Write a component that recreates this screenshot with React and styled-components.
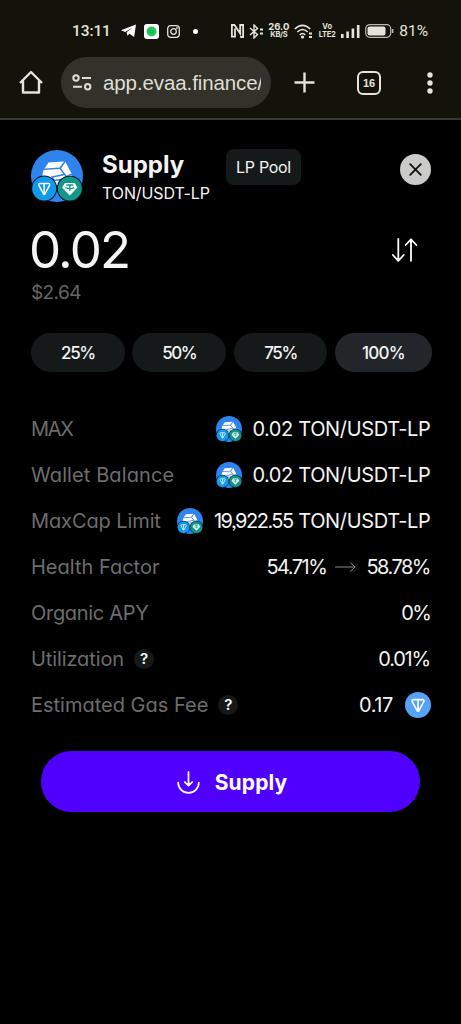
import React, { useState } from 'react';
import styled, { createGlobalStyle } from 'styled-components';

const GlobalStyle = createGlobalStyle`
  * {
    box-sizing: border-box;
  }

  body {
    margin: 0;
    background: #000;
    color: #f4f4f4;
    font-family: Inter, "Liberation Sans", sans-serif;
    font-feature-settings: "cv11", "ss03";
  }

  svg {
    display: block;
    flex-shrink: 0;
  }

  button {
    border: 0;
    padding: 0;
    background: none;
    color: inherit;
    font: inherit;
    font-feature-settings: inherit;
    cursor: pointer;
  }
`;

const Screen = styled.div`
  display: flex;
  flex-direction: column;
  width: 461px;
  height: 1024px;
  overflow: hidden;
`;

const Chrome = styled.header`
  height: 120px;
  background: #13130b;
  border-bottom: 2px solid #393734;
  color: #e4e4da;
`;

const StatusBar = styled.div`
  display: flex;
  align-items: center;
  justify-content: space-between;
  height: 57px;
  padding: 5px 33px 0 72px;
`;

const StatusGroup = styled.div`
  display: flex;
  align-items: center;
  gap: ${({ $gap }) => $gap}px;
`;

const Clock = styled.span`
  font: 500 15.5px Roboto, sans-serif;
  letter-spacing: -0.1px;
  width: 41px;
`;

const Dot = styled.span`
  width: 5px;
  height: 5px;
  border-radius: 50%;
  background: #fff;
  margin-left: 5px;
`;

const Stacked = styled.span`
  display: flex;
  flex-direction: column;
  align-items: center;
  width: ${({ $width }) => $width}px;
  font-size: ${({ $size }) => $size}px;
  font-weight: 700;
  line-height: 8px;
  white-space: nowrap;

  small {
    font-size: 7.5px;
    letter-spacing: -0.3px;
  }
`;

const Battery = styled.span`
  font: 400 15.5px Roboto, sans-serif;
`;

const Toolbar = styled.div`
  display: flex;
  align-items: center;
  height: 51px;
  padding-left: 19px;
`;

const AddressBar = styled.div`
  display: flex;
  align-items: center;
  width: 210px;
  height: 51px;
  margin: 0 23px 0 18px;
  padding: 0 10px 0 11px;
  border-radius: 26px;
  background: #32322a;
`;

const Url = styled.span`
  width: 158px;
  margin-left: 11px;
  overflow: hidden;
  white-space: nowrap;
  font: 400 20.5px "Liberation Sans", sans-serif;
  letter-spacing: -0.1px;
  color: #deded4;
`;

const TabCount = styled.button`
  display: grid;
  place-items: center;
  width: 24px;
  height: 24px;
  margin: 0 46px 0 42px;
  border: 2px solid #e4e4da;
  border-radius: 6px;
  font: 700 11px "Liberation Sans", sans-serif;
`;

const Sheet = styled.main`
  padding: 29px 30px 0 31px;
`;

const TopRow = styled.div`
  display: flex;
  align-items: flex-start;
  height: 76px;

  > svg {
    margin-top: 1px;
  }
`;

const Titles = styled.div`
  margin-left: 19px;
  width: 124px;
`;

const Title = styled.h1`
  margin: 1px 0 0;
  font-size: 24px;
  font-weight: 700;
  line-height: 30px;
  letter-spacing: 0;
`;

const Subtitle = styled.div`
  font-size: 16px;
  line-height: 26px;
  letter-spacing: -0.1px;
  white-space: nowrap;
`;

const Badge = styled.div`
  display: grid;
  place-items: center;
  width: 75px;
  height: 36px;
  border-radius: 8px;
  background: #15191a;
  font-size: 16px;
  letter-spacing: -0.3px;
`;

const CloseButton = styled.button`
  display: grid;
  place-items: center;
  width: 31px;
  height: 31px;
  margin: 5px 0 0 auto;
  border-radius: 50%;
  background: #cbcbca;
  color: #111;
`;

const AmountRow = styled.div`
  display: flex;
  align-items: center;
  justify-content: space-between;
  height: 50px;
  padding-right: 13px;
`;

const Amount = styled.div`
  font-size: 51px;
  line-height: 50px;
  letter-spacing: -1.8px;
  margin-left: -2px;
`;

const Fiat = styled.div`
  height: 58px;
  padding-top: 6px;
  font-size: 19px;
  line-height: 24px;
  letter-spacing: -0.6px;
  color: #666;
`;

const Shares = styled.div`
  display: flex;
  gap: 7.5px;
  margin-right: -1px;
`;

const Share = styled.button`
  flex: ${({ $active }) => ($active ? '0 0 97px' : '1')};
  height: 39px;
  border-radius: 20px;
  background: ${({ $active }) => ($active ? '#22262a' : '#15191a')};
  font-size: 17px;
  font-weight: 550;
  letter-spacing: ${({ $active }) => ($active ? -0.7 : -1.4)}px;
`;

const Details = styled.div`
  margin-top: 34px;
`;

const Row = styled.div`
  display: flex;
  align-items: center;
  justify-content: space-between;
  height: 46px;
  font-size: 20px;
  line-height: 26px;
`;

const Label = styled.span`
  display: flex;
  align-items: center;
  gap: 10px;
  color: #6d6d6d;
  letter-spacing: ${({ $track = 0 }) => $track}px;
  white-space: nowrap;
`;

const Value = styled.span`
  display: flex;
  align-items: center;
  gap: ${({ $gap = 11 }) => $gap}px;
  white-space: nowrap;
`;

const Num = styled.span`
  letter-spacing: ${({ $track = -1.2 }) => $track}px;
  padding-right: 1px;
`;

const Unit = styled.span`
  margin-left: -6px;
  padding-right: 0.5px;
  letter-spacing: -0.35px;
`;

const Help = styled.span`
  display: grid;
  place-items: center;
  width: 20px;
  height: 20px;
  border-radius: 50%;
  background: #15191a;
  color: #fff;
  font-size: 15px;
  font-weight: 600;
  line-height: 20px;
  letter-spacing: 0;
`;

const SupplyButton = styled.button`
  display: flex;
  align-items: center;
  justify-content: center;
  gap: 15px;
  width: 379px;
  height: 61px;
  margin: 23px 0 0 10px;
  padding: 1px 0 0 3px;
  border-radius: 31px;
  background: #5000ff;
  color: #fff;
  font-size: 21px;
  font-weight: 700;
  letter-spacing: 0.1px;
`;

const TonMark = ({ x, y, scale = 1, fill }) => (
  <g transform={`translate(${x} ${y}) scale(${scale})`} fill="none" stroke="#fff" strokeWidth="1.5" strokeLinejoin="round">
    <circle r="12" fill={fill} stroke="none" />
    <path d="M-4.4-5H4.4Q6-4.6 5.2-2.8L.7 5.4Q0 6.2-.7 5.4L-5.2-2.8Q-6-4.6-4.4-5ZM0-5V5.4" />
  </g>
);

const PoolIcon = ({ size }) => (
  <svg width={size} height={size} viewBox="0 0 52 52">
    <circle cx="26" cy="26" r="26" fill="#2e83ec" />
    <path d="M17.5 12.5 33 11.5 28.5 17.5 13.5 18.5ZM34.5 12 40.5 23.5 35.5 25.5 30 18.5ZM12.5 20 28.5 19 34 26 41 25 42.5 36H9Z" fill="#fff" />
    <path d="M33.5 24.5 21 27 23 30.5 30 29.5 27 34" fill="none" stroke="#2e83ec" strokeWidth="1.6" />
    <circle cx="13.2" cy="38.5" r="13" fill="#07131d" />
    <TonMark x="13.2" y="38.5" fill="#1099ed" />
    <circle cx="38.8" cy="38.5" r="13" fill="#07131d" />
    <circle cx="38.8" cy="38.5" r="12" fill="#10978b" />
    <path d="M34 33H43.6L46.5 37.5 38.8 45.5 31.1 37.5Z" fill="#fff" />
    <path d="M35.3 35h7M38.8 35v6M34.5 37.7q4.3 1.8 8.6 0" fill="none" stroke="#10978b" strokeWidth="1.3" />
  </svg>
);

const shares = [25, 50, 75, 100];

const App = () => {
  const [share, setShare] = useState(100);

  return (
    <Screen>
      <GlobalStyle />
      <Chrome>
        <StatusBar>
          <StatusGroup $gap={8}>
            <Clock>13:11</Clock>
            <svg width="15" height="14" viewBox="0 0 16 14">
              <path d="M16 0 14 13.5 9 10 6.8 12 6 8.2 12 3.5 4.5 8 0 6.3Z" fill="#fff" />
            </svg>
            <svg width="15" height="15" viewBox="0 0 15 15">
              <rect width="15" height="15" rx="3" fill="#fff" />
              <circle cx="7.5" cy="7.5" r="5" fill="#1fca63" />
              <path d="M5 6.7q2.5-.7 5 .3M5.3 8.7q2-.5 4 .3" fill="none" stroke="#139b49" strokeWidth=".8" />
            </svg>
            <svg width="13" height="13" viewBox="0 0 13 13" fill="none" stroke="#e4e4da" strokeWidth="1.3">
              <rect x=".7" y=".7" width="11.6" height="11.6" rx="3" />
              <circle cx="6.5" cy="6.5" r="2.8" />
              <circle cx="10" cy="3" r=".3" />
            </svg>
            <Dot />
          </StatusGroup>
          <StatusGroup $gap={5.2}>
            <svg width="13" height="14" viewBox="0 0 13 14" fill="none" stroke="#e4e4da" strokeWidth="1.8">
              <path d="M.9 0V12.6H4V4.5M4 1H1M3.5 1 9.2 9.5V1H12.1V13H9.2" />
            </svg>
            <svg width="14" height="15" viewBox="0 0 14 15" fill="none" stroke="#e4e4da" strokeWidth="1.4">
              <path d="M1 4 8.5 10.5 5 14V1L8.5 4.5 1 11" />
              <path d="M11 5.5h3M11 9.5h3" strokeWidth="2" />
            </svg>
            <Stacked $width={21} $size={9.5}>
              26.0<small>KB/S</small>
            </Stacked>
            <svg width="19" height="15" viewBox="0 0 19 15" fill="none" stroke="#e4e4da" strokeWidth="1.6">
              <path d="M.8 5Q8.5-2.4 16.2 5M3.3 8Q8.5 3 13.7 8M5.8 10.8Q8.5 8.2 11.2 10.8" />
              <circle cx="8.5" cy="13" r=".8" fill="#e4e4da" />
              <path d="M15 9.6h3M15 13h3" strokeWidth="2" />
            </svg>
            <Stacked $width={17} $size={7.5}>
              <span>Vo</span>
              <small>LTE2</small>
            </Stacked>
            <svg width="19" height="14" viewBox="0 0 19 14" fill="#e4e4da">
              <path d="M0 10h2.6v4H0zM5.3 7.5h2.6V14H5.3zM10.6 4.5h2.6V14h-2.6zM15.9 1h2.6v13h-2.6z" />
            </svg>
            <svg width="29" height="14" viewBox="0 0 29 14">
              <rect x=".7" y=".7" width="25" height="12.6" rx="4" fill="none" stroke="#b8b8ae" strokeWidth="1.2" />
              <rect x="2.5" y="2.5" width="18" height="9" rx="2" fill="#e4e4da" />
              <path d="M27.6 5v4" stroke="#b8b8ae" strokeWidth="1.6" />
            </svg>
            <Battery>81%</Battery>
          </StatusGroup>
        </StatusBar>
        <Toolbar>
          <svg width="24" height="25" viewBox="0 0 24 25" fill="none" stroke="#e4e4da" strokeWidth="2.4" strokeLinejoin="round">
            <path d="M1 13 12 2 23 13M4 10.5V22.5H20V10.5" />
          </svg>
          <AddressBar>
            <svg width="20" height="17" viewBox="0 0 20 17" fill="none" stroke="#deded4" strokeWidth="2">
              <circle cx="4" cy="4" r="2.7" />
              <circle cx="15.7" cy="12.8" r="2.7" />
              <path d="M10 4h9M1 12.8h9" />
            </svg>
            <Url>app.evaa.finance/</Url>
          </AddressBar>
          <svg width="21" height="21" viewBox="0 0 21 21" stroke="#e4e4da" strokeWidth="2.4">
            <path d="M10.5.5v20M.5 10.5h20" />
          </svg>
          <TabCount>16</TabCount>
          <svg width="6" height="22" viewBox="0 0 6 22" fill="#e4e4da">
            <circle cx="3" cy="3" r="2.7" />
            <circle cx="3" cy="11" r="2.7" />
            <circle cx="3" cy="19" r="2.7" />
          </svg>
        </Toolbar>
      </Chrome>

      <Sheet>
        <TopRow>
          <PoolIcon size={52} />
          <Titles>
            <Title>Supply</Title>
            <Subtitle>TON/USDT-LP</Subtitle>
          </Titles>
          <Badge>LP Pool</Badge>
          <CloseButton aria-label="Close">
            <svg width="13" height="13" viewBox="0 0 13 13" stroke="currentColor" strokeWidth="1.8" strokeLinecap="round">
              <path d="M1.2 1.2 11.8 11.8M11.8 1.2 1.2 11.8" />
            </svg>
          </CloseButton>
        </TopRow>

        <AmountRow>
          <Amount>0.02</Amount>
          <svg width="26" height="24" viewBox="0 0 26 24" fill="none" stroke="#fff" strokeWidth="1.8" strokeLinecap="round" strokeLinejoin="round">
            <path d="M6.3 1V22.5M.9 17 6.3 22.8 11.7 17M19 22.8V1.5M13.6 7 19 1.3 24.4 7" />
          </svg>
        </AmountRow>
        <Fiat>$2.64</Fiat>

        <Shares>
          {shares.map((value) => (
            <Share key={value} $active={value === share} onClick={() => setShare(value)}>
              {value}%
            </Share>
          ))}
        </Shares>

        <Details>
          <Row>
            <Label $track={-1.3}>MAX</Label>
            <Value $gap={10.5}>
              <PoolIcon size={26} />
              <Num $track={-0.5}>0.02</Num>
              <Unit>TON/USDT-LP</Unit>
            </Value>
          </Row>
          <Row>
            <Label $track={0.1}>Wallet Balance</Label>
            <Value $gap={10.5}>
              <PoolIcon size={26} />
              <Num $track={-0.5}>0.02</Num>
              <Unit>TON/USDT-LP</Unit>
            </Value>
          </Row>
          <Row>
            <Label $track={-0.1}>MaxCap Limit</Label>
            <Value $gap={10.5}>
              <PoolIcon size={26} />
              <Num $track={-1.5}>19,922.55</Num>
              <Unit>TON/USDT-LP</Unit>
            </Value>
          </Row>
          <Row>
            <Label>Health Factor</Label>
            <Value $gap={8}>
              <Num $track={-1.5}>54.71%</Num>
              <svg width="23" height="10" viewBox="0 0 23 10" fill="none" stroke="#8a8a8a" strokeLinecap="round">
                <path d="M.5 5H20M15.5.8 20 5 15.5 9.2" />
              </svg>
              <Num $track={-1.5}>58.78%</Num>
            </Value>
          </Row>
          <Row>
            <Label $track={-0.3}>Organic APY</Label>
            <Value>
              <Num $track={-1.8}>0%</Num>
            </Value>
          </Row>
          <Row>
            <Label $track={-0.1}>
              Utilization
              <Help>?</Help>
            </Label>
            <Value>
              <Num>0.01%</Num>
            </Value>
          </Row>
          <Row>
            <Label>
              Estimated Gas Fee
              <Help>?</Help>
            </Label>
            <Value>
              <Num $track={-0.4}>0.17</Num>
              <svg width="26" height="26" viewBox="-12 -12 24 24">
                <TonMark x="0" y="0" fill="#55a2f8" />
              </svg>
            </Value>
          </Row>
        </Details>

        <SupplyButton>
          <svg width="23" height="23" viewBox="0 0 24 24" fill="none" stroke="#fff" strokeWidth="1.8" strokeLinecap="round" strokeLinejoin="round">
            <path d="M12 1V15M8.2 11.5 12 15.3 15.8 11.5M1.2 12A10.8 10.8 0 0 0 22.8 12" />
          </svg>
          Supply
        </SupplyButton>
      </Sheet>
    </Screen>
  );
};

export default App;
